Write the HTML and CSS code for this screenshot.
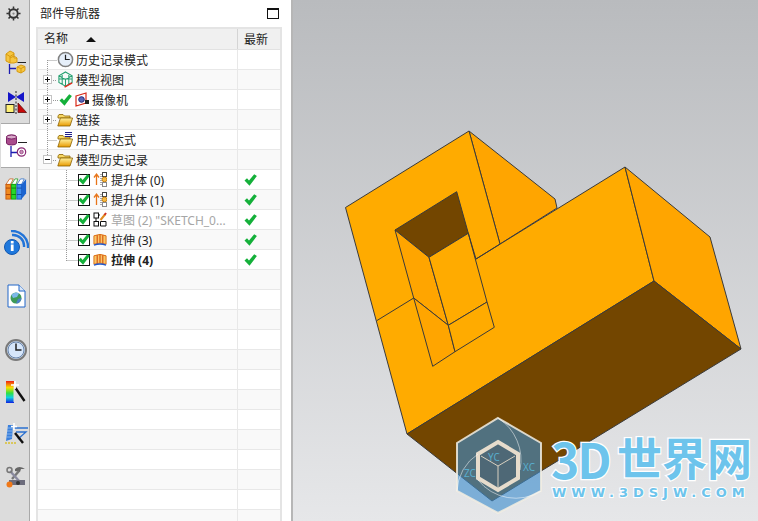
FILE: index.html
```html
<!DOCTYPE html>
<html lang="zh">
<head>
<meta charset="utf-8">
<title>部件导航器</title>
<link rel="stylesheet" href="styles.css">
</head>
<body>
<svg class="sprite" width="0" height="0" aria-hidden="true">
  <defs>
    <linearGradient id="folderG" x1="0" y1="0" x2="0" y2="1"><stop offset="0" stop-color="#fff2a0"/><stop offset="1" stop-color="#e89a00"/></linearGradient>
    <linearGradient id="rainbow" x1="0" y1="0" x2="0" y2="1"><stop offset="0" stop-color="#f02010"/><stop offset=".3" stop-color="#f8e000"/><stop offset=".55" stop-color="#30e040"/><stop offset=".75" stop-color="#10d0e0"/><stop offset="1" stop-color="#1020e0"/></linearGradient>
    <symbol id="check" viewBox="0 0 13 12"><path d="M.5 6.500 L3 4.200 L5 6.500 L10.200 .3 L12.900 2 L5.500 11.700 Z" fill="#14b03a"/></symbol>
    <symbol id="folder" viewBox="0 0 16 14"><path d="M1 3 L2 1.500 H6 L7.500 3 H13 V5 H1Z" fill="#f7d866" stroke="#8a6200" stroke-width=".8"/><path d="M.8 13 L3.400 5 H15.600 L13 13Z" fill="url(#folderG)" stroke="#8a6200" stroke-width=".8"/></symbol>
    <symbol id="lift" viewBox="0 0 14 15"><path d="M3.500 13 V3 M1 5.500 L3.500 2 L6 5.500" fill="none" stroke="#e8751a" stroke-width="1.300"/><path d="M8 2 V13" stroke="#555" stroke-dasharray="1 1" fill="none"/><rect x="9.500" y=".5" width="4" height="4" fill="#fff" stroke="#444"/><circle cx="11.500" cy="7.500" r="2.400" fill="#f4b942" stroke="#c87f10"/><rect x="9.500" y="10.500" width="4" height="4" fill="#fff" stroke="#888"/></symbol>
    <symbol id="sketch" viewBox="0 0 14 15"><rect x="1" y="1" width="4.500" height="5" fill="#fff" stroke="#111"/><rect x="1" y="9.500" width="4.500" height="4.500" fill="#fff" stroke="#111"/><path d="M7.500 9.500 H13 V14 H7.500Z" fill="#fff" stroke="#111"/><path d="M5.500 3 H7 M3 6 V9" stroke="#111"/><path d="M7.500 8 L12 2.500" stroke="#e08a1e" stroke-width="2"/><path d="M11.500 3 L13 1" stroke="#d03020" stroke-width="2"/></symbol>
    <symbol id="extrude" viewBox="0 0 15 14"><path d="M1 2.500 Q7.500 -.5 14 2.500 V11.500 Q7.500 9 1 11.500Z" fill="#f8c868" stroke="#d96a10"/><path d="M4.500 2 V10.500 M7.500 1.500 V10 M10.500 2 V10.500" stroke="#d8500f" stroke-width="1.200"/><path d="M1 12.500 Q7.500 10 14 12.500" fill="none" stroke="#2458c8" stroke-width="1.500"/></symbol>
  </defs>
</svg>

<div class="app">
  <nav class="rail">
    <div class="tab tab-gear">
      <svg class="ic" width="15" height="15" viewBox="0 0 16 16"><circle cx="8" cy="8" r="4.500" fill="none" stroke="#333" stroke-width="2"/><path d="M8 .5V3M8 13V15.500M.5 8H3M13 8H15.500M2.700 2.700L4.400 4.400M11.600 11.600L13.300 13.300M2.700 13.300L4.400 11.600M11.600 4.400L13.300 2.700" stroke="#333" stroke-width="1.600"/><circle cx="8" cy="8" r="1.200" fill="#888"/></svg>
    </div>
    <div class="tab tab-assembly">
      <svg class="ic" width="22" height="24" viewBox="0 0 22 24"><path d="M1 4 L5 1 L9 3 V8 L12 8 L12 12 L9 13 L5 13 L1 11Z" fill="#f6c640" stroke="#d79a10"/><path d="M1 4 L5 6.500 L9 4 M5 6.500 V13 M5 8 L9 6 L12 8" fill="none" stroke="#d79a10"/><path d="M12.500 12.500 H21" stroke="#222"/><path d="M4.500 14 V24 M4.500 18.500 H11" stroke="#1c1cb0" stroke-width="1.300"/><path d="M12 17 L16 15 L20 16.500 V20.500 L16 23 L12 21.500Z" fill="#f6c640" stroke="#d79a10"/><path d="M12 17 L16 18.500 L20 16.500 M16 18.500 V23" fill="none" stroke="#d79a10"/></svg>
    </div>
    <div class="tab tab-constraint">
      <svg class="ic" width="22" height="24" viewBox="0 0 22 24"><path d="M3 1 L11 6 L19 1 V11 L11 6 L3 11Z" fill="#1414c8"/><path d="M11 0 V24" stroke="#222" stroke-dasharray="2 1.500"/><rect x="1" y="13.500" width="8" height="8" fill="#fff176" stroke="#222"/><path d="M13 12 L21.500 21.500 H13Z" fill="#c80808" stroke="#601010" stroke-width=".8"/></svg>
    </div>
    <div class="tab tab-part active">
      <svg class="ic" width="22" height="24" viewBox="0 0 22 24"><path d="M.5 3 A5 2 0 0 1 10.500 3 V9 A5 2 0 0 1 .5 9Z" fill="#a94c8c" stroke="#7b2466"/><ellipse cx="5.500" cy="3" rx="5" ry="2" fill="#d8a8c8" stroke="#7b2466"/><path d="M12 8.500 H21" stroke="#222"/><path d="M5 12 V23 M5 18.500 H11" stroke="#1c1cb0" stroke-width="1.300"/><circle cx="15.500" cy="18" r="4.200" fill="#fff" stroke="#8a2a74" stroke-width="1.200"/><circle cx="15.500" cy="18" r="1.800" fill="#c890b8" stroke="#8a2a74" stroke-width=".7"/></svg>
    </div>
    <div class="tab tab-books">
      <svg class="ic" width="24" height="22" viewBox="0 0 24 24"><path d="M1 7 L5 1 H9 L6 7Z" fill="#fff" stroke="#c85a10" stroke-width=".8"/><rect x="1" y="7" width="5" height="16" fill="#f08a20" stroke="#c85a10"/><path d="M1 11H6M1 18H6" stroke="#a84008"/><path d="M7 7 L11 1 H14 L12 7Z" fill="#fff" stroke="#1a9a1a" stroke-width=".8"/><rect x="7" y="7" width="5" height="16" fill="#28d828" stroke="#12a012"/><path d="M7 11H12M7 18H12" stroke="#0a800a"/><path d="M13 7 L17 1 H21 L18 7Z" fill="#fff" stroke="#2468c8" stroke-width=".8"/><rect x="13" y="7" width="5" height="16" fill="#3c8cf0" stroke="#1c5cc0"/><path d="M18 7 L23 1 V17 L18 23Z" fill="#1c64d0"/><path d="M13 11H18M13 18H18" stroke="#14489c"/></svg>
    </div>
    <div class="tab tab-info">
      <svg class="ic" width="25" height="25" viewBox="0 0 25 25"><path d="M8 5 A11 11 0 0 1 20 17 M7 1 A16 16 0 0 1 24 18" fill="none" stroke="#2274d8" stroke-width="2.400"/><circle cx="8" cy="17" r="7.500" fill="#1f78dc" stroke="#1258b0"/><rect x="6.800" y="14.500" width="2.800" height="6.500" fill="#fff"/><rect x="6.800" y="11" width="2.800" height="2.500" fill="#fff"/></svg>
    </div>
    <div class="tab tab-doc">
      <svg class="ic" width="19" height="24" viewBox="0 0 19 24"><path d="M1 1 H12 L18 7 V23 H1Z" fill="#fff" stroke="#2266c8"/><path d="M12 1 V7 H18" fill="#d8e6f8" stroke="#2266c8"/><circle cx="9" cy="14" r="5.500" fill="#3d9a58"/><path d="M4.500 11 A5.500 5.500 0 0 1 12 9.500 L10 13 L6 14Z" fill="#7cb8e8"/><path d="M9 19.500 A5.500 5.500 0 0 0 14.500 14 L11 15Z" fill="#4c80c8"/></svg>
    </div>
    <div class="tab tab-clock">
      <svg class="ic" width="22" height="22" viewBox="0 0 22 22"><circle cx="11" cy="11" r="10" fill="#d6e6fa" stroke="#7a7a7a" stroke-width="2"/><circle cx="11" cy="11" r="8" fill="none" stroke="#3a5a88" stroke-width=".7"/><path d="M11 4.500 V11 H16.500" fill="none" stroke="#222" stroke-width="1.500"/></svg>
    </div>
    <div class="tab tab-rainbow">
      <svg class="ic" width="22" height="24" viewBox="0 0 22 24"><rect x="1" y="1" width="8" height="22" fill="url(#rainbow)"/><path d="M9 4 L9 22" stroke="#ddd"/><path d="M10.500 8 L19.500 21" stroke="#111" stroke-width="2.400"/><path d="M10 1 V9 M6 5 H14" stroke="#fff" stroke-width="1.500"/></svg>
    </div>
    <div class="tab tab-wand">
      <svg class="ic" width="24" height="22" viewBox="0 0 24 22"><path d="M4 2 H9 L8 16 L2 18Z" fill="#3a80dc"/><path d="M3 5H9M3 8H8.500M3 11H8.500M2.500 14H8" stroke="#a8c8f0" stroke-width=".7"/><path d="M1 20 H12" stroke="#d8c030" stroke-width="1.400" stroke-dasharray="2 1"/><path d="M10 5 H24 M12 9 H22 L14 16" fill="none" stroke="#2a70d0" stroke-width="1.300"/><path d="M11 10 L19 20" stroke="#111" stroke-width="2.400"/><path d="M10 0 V7 M7 3.500 H13" stroke="#fff" stroke-width="1.500"/></svg>
    </div>
    <div class="tab tab-tools">
      <svg class="ic" width="20" height="23" viewBox="0 0 20 23"><path d="M9 4 Q13 0 19 4 L15 4 L14 7 L9 6Z" fill="#666"/><path d="M13 6 L6 14" stroke="#777" stroke-width="2.400"/><path d="M4 6 L14 17" stroke="#8a8aa0" stroke-width="2.400"/><circle cx="3.500" cy="5" r="2.500" fill="none" stroke="#777" stroke-width="1.500"/><path d="M3 15 H19 V20 H3Z" fill="#6c6c7c"/><circle cx="12" cy="18" r="2" fill="#333"/><circle cx="3.500" cy="19.500" r="3" fill="#f07818"/></svg>
    </div>
  </nav>

  <section class="panel">
    <header class="panel-head">
      <span>部件导航器</span>
      <span class="maximize"></span>
    </header>
    <div class="table">
      <div class="thead">
        <div class="th th-name">名称<span class="sort"></span></div>
        <div class="th th-new">最新</div>
      </div>
      <div class="tbody">
        <svg class="guides" width="60" height="220" viewBox="0 0 60 220" aria-hidden="true">
          <path d="M10.500 10 V111 M10.500 10.500 H20 M14 30.500 H20 M14 50.500 H21 M14 70.500 H20 M10.500 90.500 H20 M14 110.500 H20 M29.500 120 V211 M29.500 130.500 H41 M29.500 150.500 H41 M29.500 170.500 H41 M29.500 190.500 H41 M29.500 210.500 H41" fill="none" stroke="#999" stroke-dasharray="1 1"/>
        </svg>

        <div class="row">
          <div class="name lvl0"><span class="slot"></span>
            <svg class="ti" width="17" height="17" viewBox="0 0 18 18"><circle cx="9" cy="9" r="7.500" fill="#e6effa" stroke="#808080" stroke-width="1.600"/><path d="M9 4 V9 H13.500" fill="none" stroke="#222" stroke-width="1.300"/></svg>
            <span class="lbl">历史记录模式</span></div>
          <div class="cell-new"></div>
        </div>
        <div class="row alt">
          <div class="name lvl0"><span class="slot"><span class="exp plus"></span></span>
            <svg class="ti" width="17" height="17" viewBox="0 0 18 18"><path d="M9 1 L16 5 V12 L9 16 L2 12 V5Z M2 5 L9 9 L16 5 M9 9 V16 M5.500 3 V14 M12.500 3 V14 M2 8.500 L16 8.500" fill="none" stroke="#25a070" stroke-width="1.100"/><path d="M8 17 L16 12.500" stroke="#e03020" stroke-width="1.600"/></svg>
            <span class="lbl">模型视图</span></div>
          <div class="cell-new"></div>
        </div>
        <div class="row">
          <div class="name lvl0"><span class="slot"><span class="exp plus"></span></span>
            <svg class="ck-l" width="13" height="12"><use href="#check"/></svg>
            <svg class="cam" width="15" height="15" viewBox="0 0 15 15"><path d="M1 4 L11 1 V11 L1 14Z" fill="#fff" stroke="#d82818" stroke-width="1.200"/><circle cx="6.500" cy="7.500" r="2.800" fill="#5868b8" stroke="#28287a"/><path d="M10 8 H14 V12 H10Z" fill="#222"/></svg>
            <span class="lbl">摄像机</span></div>
          <div class="cell-new"></div>
        </div>
        <div class="row alt">
          <div class="name lvl0"><span class="slot"><span class="exp plus"></span></span>
            <svg class="ti-folder" width="16" height="14"><use href="#folder"/></svg>
            <span class="lbl">链接</span></div>
          <div class="cell-new"></div>
        </div>
        <div class="row">
          <div class="name lvl0"><span class="slot"></span>
            <svg class="ti-folder" width="16" height="16" viewBox="0 0 16 16"><use href="#folder" y="2" width="16" height="14"/><path d="M8 .5H15M8 2.500H15M8 4.500H15" stroke="#20208a"/></svg>
            <span class="lbl">用户表达式</span></div>
          <div class="cell-new"></div>
        </div>
        <div class="row alt">
          <div class="name lvl0"><span class="slot"><span class="exp"></span></span>
            <svg class="ti-folder" width="16" height="14"><use href="#folder"/></svg>
            <span class="lbl">模型历史记录</span></div>
          <div class="cell-new"></div>
        </div>
        <div class="row">
          <div class="name lvl1"><span class="tick"><svg width="12" height="11"><use href="#check"/></svg></span>
            <svg class="fi" width="14" height="15"><use href="#lift"/></svg>
            <span class="lbl">提升体 (0)</span></div>
          <div class="cell-new"><svg width="13" height="12"><use href="#check"/></svg></div>
        </div>
        <div class="row alt">
          <div class="name lvl1"><span class="tick"><svg width="12" height="11"><use href="#check"/></svg></span>
            <svg class="fi" width="14" height="15"><use href="#lift"/></svg>
            <span class="lbl">提升体 (1)</span></div>
          <div class="cell-new"><svg width="13" height="12"><use href="#check"/></svg></div>
        </div>
        <div class="row">
          <div class="name lvl1"><span class="tick"><svg width="12" height="11"><use href="#check"/></svg></span>
            <svg class="fi" width="14" height="15"><use href="#sketch"/></svg>
            <span class="lbl muted">草图 (2) "SKETCH_0...</span></div>
          <div class="cell-new"><svg width="13" height="12"><use href="#check"/></svg></div>
        </div>
        <div class="row alt">
          <div class="name lvl1"><span class="tick"><svg width="12" height="11"><use href="#check"/></svg></span>
            <svg class="fi" width="14" height="14"><use href="#extrude"/></svg>
            <span class="lbl">拉伸 (3)</span></div>
          <div class="cell-new"><svg width="13" height="12"><use href="#check"/></svg></div>
        </div>
        <div class="row">
          <div class="name lvl1"><span class="tick"><svg width="12" height="11"><use href="#check"/></svg></span>
            <svg class="fi" width="14" height="14"><use href="#extrude"/></svg>
            <span class="lbl strong">拉伸 (4)</span></div>
          <div class="cell-new"><svg width="13" height="12"><use href="#check"/></svg></div>
        </div>
        <div class="row alt"><div class="name"></div><div class="cell-new"></div></div>
        <div class="row"><div class="name"></div><div class="cell-new"></div></div>
        <div class="row alt"><div class="name"></div><div class="cell-new"></div></div>
        <div class="row"><div class="name"></div><div class="cell-new"></div></div>
        <div class="row alt"><div class="name"></div><div class="cell-new"></div></div>
        <div class="row"><div class="name"></div><div class="cell-new"></div></div>
        <div class="row alt"><div class="name"></div><div class="cell-new"></div></div>
        <div class="row"><div class="name"></div><div class="cell-new"></div></div>
        <div class="row alt"><div class="name"></div><div class="cell-new"></div></div>
        <div class="row"><div class="name"></div><div class="cell-new"></div></div>
        <div class="row alt"><div class="name"></div><div class="cell-new"></div></div>
        <div class="row"><div class="name"></div><div class="cell-new"></div></div>
        <div class="row alt"><div class="name"></div><div class="cell-new"></div></div>
      </div>
    </div>
  </section>

  <main class="viewport">
    <svg class="scene" width="466" height="521" viewBox="292 0 466 521">
      <g stroke="#3a3a3a" stroke-width="1" stroke-linejoin="round">
        <path class="f-side" d="M469 131 L555 199 L557 208 L500 244Z"/>
        <path class="f-main" d="M345.500 207.500 L469 131 L500 244 L476 259 L625 167 L654 281 L407 434Z"/>
        <path class="f-side" d="M625 167 L710 237 L741 349 L654 281Z"/>
        <path class="f-dark" d="M407 434 L654 281 L741 349 L492 501Z"/>
        <path class="f-dark" d="M395 230 L456.700 191.700 L468.300 233.300 L429 257.300Z"/>
        <path class="f-side" d="M395 230 L429 257.300 L448.300 325.300 L413.700 298Z"/>
        <path class="f-main" d="M429 257.300 L468.300 233.300 L487 302 L448.300 325.300Z"/>
        <path class="f-side" d="M413.700 298 L448.300 325.300 L455 351.700 L432.700 366.300Z"/>
        <path class="f-main" d="M448.300 325.300 L487 302 L494.300 327.300 L455 351.700Z"/>
        <path fill="none" d="M376.700 320.700 L413.700 298 M468.300 233.300 L476 259"/>
      </g>
      <g class="logo">
        <path class="hex-out" d="M498 418 L541 443 L541 491 L498 513 L457 491 L457 443Z"/>
        <path class="hex-in" d="M498 442 L518 454 L518 478 L498 490 L478 478 L478 454Z"/>
        <path class="hex-fac" d="M481 456 L498 466 L515 456 M498 466 V488"/>
        <path class="hex-arc" d="M498 418 A50 50 0 0 1 520 470 M457 491 A46 46 0 0 1 478 454 M541 491 A48 48 0 0 1 478 480"/>
        <text class="hex-t" x="488" y="461">YC</text>
        <text class="hex-t" x="464" y="477">ZC</text>
        <text class="hex-t" x="523" y="471">XC</text>
        <text class="logo-big" x="551" y="479">3D</text>
        <text class="logo-cn" x="617" y="476">世界网</text>
        <text class="logo-url" x="552" y="497">WWW.3DSJW.COM</text>
      </g>
    </svg>
  </main>
</div>
</body>
</html>
```

FILE: styles.css
```css
* { box-sizing: border-box; }
html, body { margin: 0; height: 100%; overflow: hidden; }
body { font: 12px/20px "Noto Sans", "Noto Sans CJK SC", sans-serif; color: #222; }
.sprite { position: absolute; }

.app { display: flex; width: 758px; height: 521px; background: #fff; }

/* left tab rail */
.rail { width: 30px; flex: none; background: #dcdcdc; border-right: 1px solid #a9a9a9; display: flex; flex-direction: column; }
.tab { display: flex; align-items: center; justify-content: center; flex: none; width: 29px; padding-left: 3px; }
.ic { display: block; flex: none; }
.tab-gear { height: 26px; margin-bottom: 15px; padding-left: 0; padding-right: 3px; }
.tab-assembly { height: 42px; }
.tab-constraint { height: 40px; }
.tab-part { height: 45px; }
.active { width: 30px; margin-left: 1px; background: #fff; border-top: 1px solid #a9a9a9; border-bottom: 1px solid #a9a9a9; padding-left: 2px; }
.tab-books { height: 41px; }
.tab-info { height: 56px; margin-top: 5px; }
.tab-doc { height: 52px; }
.tab-clock { height: 56px; }
.tab-rainbow { height: 28px; }
.tab-wand { height: 56px; }
.tab-tools { height: 28px; }

/* navigator panel */
.panel { width: 261px; flex: none; background: #fff; padding: 0 9px 0 6px; display: flex; flex-direction: column; }
.panel-head { height: 27px; flex: none; display: flex; align-items: center; justify-content: space-between; padding: 0 3px 0 4px; }
.maximize { width: 12px; height: 11px; border: 1px solid #111; border-top-width: 2px; }

.table { border: 2px solid #e4e4e4; border-bottom: 0; width: 246px; flex: 1; overflow: hidden; }
.thead { display: flex; height: 21px; background: #f0f0f0; border-bottom: 1px solid #e2e2e2; }
.th { line-height: 22px; }
.th-name { width: 200px; padding-left: 6px; border-right: 1px solid #d4d4d4; display: flex; align-items: center; }
.th-new { flex: 1; padding-left: 6px; }
.sort { width: 0; height: 0; border: 5px solid transparent; border-top: 0; border-bottom: 5px solid #111; margin-left: 18px; }

.tbody { position: relative; }
.guides { position: absolute; left: -1px; top: 0; pointer-events: none; z-index: 1; }
.row { display: flex; height: 20px; background: #fff; border-bottom: 1px solid #e8e8e8; }
.alt { background: #f9f9f9; }
.name { width: 200px; display: flex; align-items: center; border-right: 1px solid #e8e8e8; height: 19px; white-space: nowrap; }
.lvl0 { padding-left: 5px; }
.lvl1 { padding-left: 40px; }
.slot { width: 9px; height: 9px; flex: none; margin-right: 5px; position: relative; z-index: 2; }
.exp { display: block; width: 9px; height: 9px; border: 1px solid #c4c4c4; background: #fff linear-gradient(#111, #111) center / 5px 1px no-repeat; }
.plus { background: linear-gradient(#111, #111) center / 5px 1px no-repeat, linear-gradient(#111, #111) center / 1px 5px no-repeat, #fff; }
.ti { flex: none; margin-right: 2px; }
.ti-folder { flex: none; margin-right: 3px; }
.ck-l { flex: none; margin-left: 2px; margin-right: 3px; }
.cam { flex: none; margin-right: 2px; }
.tick { width: 12px; height: 12px; flex: none; border: 1px solid #111; background: #fff; display: flex; align-items: center; justify-content: center; margin-right: 3px; overflow: visible; }
.tick svg { flex: none; }
.fi { flex: none; margin-right: 4px; }
.lbl { display: block; padding-top: 2px; }
.muted { color: #a6a6a6; }
.strong { font-weight: 700; }
.cell-new { flex: 1; display: flex; align-items: center; padding-left: 6px; height: 19px; }

/* 3D viewport */
.viewport { flex: 1; border-left: 2px solid #b6b6b6; background: linear-gradient(#b9bbbe, #e6e7e9); overflow: hidden; }
.scene { display: block; margin-left: -1px; }
.f-main { fill: #ffab00; }
.f-side { fill: #ffa500; }
.f-dark { fill: #734600; }

.hex-out { fill: rgba(60, 140, 205, .62); stroke: #f2ede2; stroke-width: 2; stroke-opacity: .85; }
.hex-in { fill: rgba(70, 80, 90, .25); stroke: #e6dccc; stroke-width: 4; }
.hex-fac { fill: none; stroke: #d8d0c0; stroke-width: 1; }
.hex-arc { fill: none; stroke: rgba(255, 255, 255, .5); stroke-width: 1; }
.hex-t { font: 10px "Noto Sans", sans-serif; fill: rgba(90, 190, 225, .8); }
.logo-big, .logo-cn, .logo-url { fill: #6dc4ec; stroke: #fff; stroke-width: 2.500px; paint-order: stroke; font-family: "Noto Sans CJK SC", sans-serif; font-weight: 700; }
.logo-big { font-size: 48px; letter-spacing: -2px; }
.logo-cn { font-size: 45px; }
.logo-url { font-size: 13px; letter-spacing: 5px; stroke-width: 2px; font-family: "DejaVu Sans", sans-serif; }
```
